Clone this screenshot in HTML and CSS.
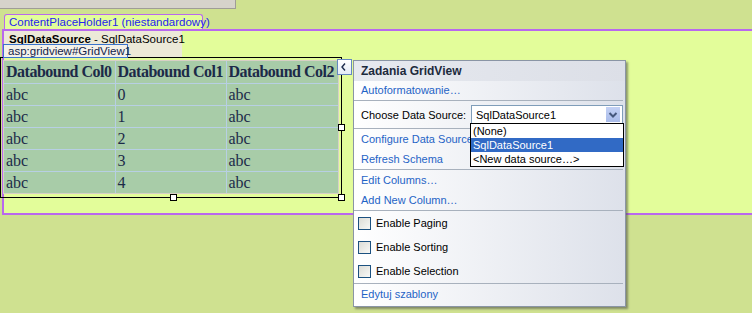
FILE: index.html
```html
<!DOCTYPE html>
<html lang="pl">
<head>
  <meta charset="UTF-8">
  <title>GridView designer</title>
  <link rel="stylesheet" href="styles.css">
</head>
<body>

<div class="top-strip"></div>
<div class="cph-tab">ContentPlaceHolder1 (niestandardowy)</div>

<div class="region">
  <div class="sqlds">
    <span class="sqlds-text"><b>SqlDataSource</b> - SqlDataSource1</span>
    <div class="tag">asp:gridview#GridView1</div>
  </div>

  <div class="gv-select">
    <div class="gv-frame">
      <table class="grid">
        <colgroup>
          <col class="c0"><col class="c1"><col class="c2">
        </colgroup>
        <thead>
          <tr><th>Databound Col0</th><th>Databound Col1</th><th>Databound Col2</th></tr>
        </thead>
        <tbody>
          <tr><td>abc</td><td>0</td><td>abc</td></tr>
          <tr><td>abc</td><td>1</td><td>abc</td></tr>
          <tr><td>abc</td><td>2</td><td>abc</td></tr>
          <tr><td>abc</td><td>3</td><td>abc</td></tr>
          <tr><td>abc</td><td>4</td><td>abc</td></tr>
        </tbody>
      </table>
    </div>

    <div class="smart-btn">
      <svg width="13" height="14" viewBox="0 0 13 14"><polyline points="7,3.5 4,7 7,10.5" fill="none" stroke="#1d2c4c" stroke-width="1.4"/></svg>
    </div>
    <span class="handle h-right"></span>
    <span class="handle h-bottom"></span>
    <span class="handle h-corner"></span>
  </div>
</div>

<!-- smart tag panel -->
<div class="tasks">
  <div class="tasks-head">Zadania GridView</div>
  <a class="item first" href="#">Autoformatowanie…</a>
  <div class="sep"></div>
  <div class="choose">
    <span>Choose Data Source:</span>
    <div class="combo">
      <span>SqlDataSource1</span>
      <span class="combo-btn">
        <svg width="14" height="15" viewBox="0 0 14 15"><polyline points="3.5,6 7,9.5 10.5,6" fill="none" stroke="#45577c" stroke-width="2"/></svg>
      </span>
    </div>
  </div>
  <div class="sep"></div>
  <a class="item" href="#">Configure Data Source...</a>
  <a class="item" href="#">Refresh Schema</a>
  <div class="sep"></div>
  <a class="item" href="#">Edit Columns…</a>
  <a class="item" href="#">Add New Column…</a>
  <div class="sep"></div>
  <label class="check"><span class="box"></span>Enable Paging</label>
  <label class="check"><span class="box"></span>Enable Sorting</label>
  <label class="check"><span class="box"></span>Enable Selection</label>
  <div class="sep"></div>
  <a class="item last" href="#">Edytuj szablony</a>

  <ul class="dropdown">
    <li>(None)</li>
    <li class="selected">SqlDataSource1</li>
    <li>&lt;New data source…&gt;</li>
  </ul>
</div>

</body>
</html>
```

FILE: styles.css
```css
/* Page */
body {
  margin: 0;
  width: 752px;
  height: 313px;
  overflow: hidden;
  position: relative;
  background: #cfe190;
  font-family: 'Liberation Sans', Arial, sans-serif;
  font-size: 11px;
}

.top-strip {
  width: 235px;
  height: 8px;
  background: #d6d3cb;
  border-right: 1px solid #9f9d97;
  border-bottom: 1px solid #9f9d97;
}

.cph-tab {
  width: 193px;
  height: 14px;
  margin: 5px 0 0 4px;
  padding-left: 4px;
  border: 1px solid #b968ee;
  border-bottom: none;
  border-radius: 3px 3px 0 0;
  background: #e3fd9a;
  color: #2424f0;
  font-size: 11.5px;
  line-height: 15px;
  white-space: nowrap;
}

/* Content region */
.region {
  height: 182px;
  margin-left: 2px;
  border: 2px solid #b968ee;
  border-right: none;
  background: #e3fd9a;
}

.sqlds {
  position: relative;
  width: 173px;
  height: 24px;
  padding: 2px 0 0 5px;
  background: #ece9d8;
  color: #000;
  font-size: 11.5px;
  line-height: 13px;
  white-space: nowrap;
}

.tag {
  position: absolute;
  left: -1px;
  top: 13px;
  width: 119px;
  height: 12px;
  padding-left: 4px;
  border: 1px solid #3a74cc;
  background: #f3f1ea;
  color: #14244a;
  font-size: 11.5px;
  line-height: 13px;
  z-index: 2;
}

/* GridView selection */
.gv-select {
  position: relative;
  box-sizing: border-box;
  width: 342px;
  height: 141px;
  margin-left: -4px;
  padding: 2px 0 0 2px;
  border: 1px solid #000;
}

.gv-frame {
  width: 334px;
  border: 1px solid #d8d0c6;
}

.grid {
  table-layout: fixed;
  width: 334px;
  border-collapse: collapse;
  border-style: hidden;
  background: #a8cca8;
  color: #1c2a48;
  font-family: 'Liberation Serif', 'Times New Roman', serif;
  font-size: 16px;
}

.grid .c0 { width: 111px; }
.grid .c1 { width: 111px; }
.grid .c2 { width: 112px; }

.grid th,
.grid td {
  height: 21px;
  padding: 0 0 0 2px;
  border: 1px solid #b7cfe3;
  text-align: left;
  white-space: nowrap;
  overflow: hidden;
  line-height: 20px;
}

.grid th {
  height: 22px;
  font-weight: bold;
  letter-spacing: -0.5px;
}

.smart-btn {
  position: absolute;
  left: 336px;
  top: 1px;
  width: 13px;
  height: 14px;
  border: 1px solid #6487c0;
  background: linear-gradient(#ffffff, #e4ebf6);
  z-index: 3;
}

.smart-btn svg { display: block; }

.handle {
  position: absolute;
  width: 5px;
  height: 5px;
  border: 1px solid #000;
  background: #fff;
}

.h-right { left: 337px; top: 66px; }
.h-bottom { left: 169px; top: 136px; }
.h-corner { left: 337px; top: 136px; }

/* Smart tag panel */
.tasks {
  position: absolute;
  left: 353px;
  top: 60px;
  box-sizing: border-box;
  width: 273px;
  height: 247px;
  display: flex;
  flex-direction: column;
  border: 1px solid #8a95a5;
  background: linear-gradient(to right, #ffffff, #dde1ea);
  box-shadow: 2px 2px 2px rgba(70, 70, 70, 0.55);
  z-index: 5;
}

.tasks-head {
  height: 20px;
  padding-left: 7px;
  background: linear-gradient(to right, #e6e9ef, #dcdfe7);
  color: #1c2a3c;
  font-weight: bold;
  font-size: 12px;
  line-height: 20px;
}

.item {
  display: block;
  height: 20px;
  padding-left: 7px;
  color: #1f63c6;
  text-decoration: none;
  line-height: 20px;
}

.item.first { height: 19px; line-height: 18px; }
.item.last { height: 22px; line-height: 21px; }

.sep {
  height: 1px;
  margin-right: 2px;
  background: #a8b1bd;
}

.choose {
  height: 27px;
  display: flex;
  align-items: center;
  padding-left: 7px;
  color: #000;
}

.combo {
  position: relative;
  box-sizing: border-box;
  width: 152px;
  height: 21px;
  margin: 1px 2px 0 auto;
  padding-left: 4px;
  border: 1px solid #7f9db9;
  background: #fff;
  line-height: 19px;
}

.combo-btn {
  position: absolute;
  right: 2px;
  top: 1px;
  width: 14px;
  height: 15px;
  background: linear-gradient(#c3d1f4, #a9bbe9);
}

.combo-btn svg { display: block; }

.check {
  height: 24px;
  display: flex;
  align-items: center;
  gap: 5px;
  padding-left: 4px;
  color: #000;
}

.check .box {
  box-sizing: border-box;
  width: 13px;
  height: 13px;
  border: 1px solid #1c5180;
  background: linear-gradient(135deg, #dcdcd6, #f8f8f6);
}

.dropdown {
  position: absolute;
  left: 116px;
  top: 62px;
  width: 152px;
  margin: 0;
  padding: 0;
  list-style: none;
  border: 1px solid #000;
  background: #fff;
  color: #000;
}

.dropdown li {
  height: 14px;
  padding-left: 2px;
  line-height: 14px;
}

.dropdown .selected {
  background: #316ac5;
  color: #fff;
}
```
